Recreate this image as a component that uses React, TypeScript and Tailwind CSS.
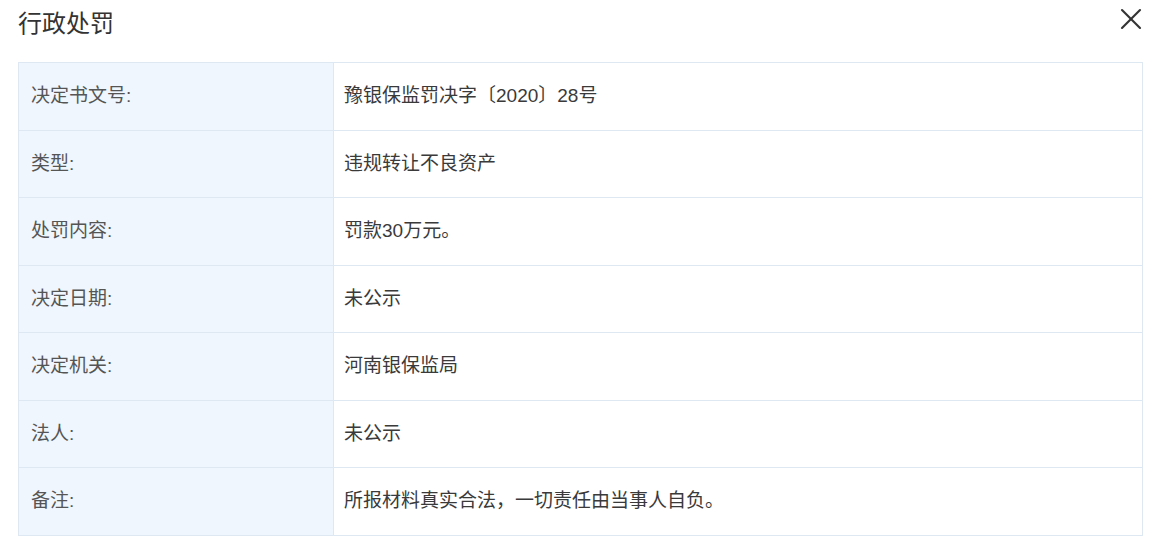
import { X } from 'lucide-react';

const rows: [string, string][] = [
  ['决定书文号:', '豫银保监罚决字〔2020〕28号'],
  ['类型:', '违规转让不良资产'],
  ['处罚内容:', '罚款30万元。'],
  ['决定日期:', '未公示'],
  ['决定机关:', '河南银保监局'],
  ['法人:', '未公示'],
  ['备注:', '所报材料真实合法，一切责任由当事人自负。'],
];

export default function App() {
  return (
    <div
      className="w-[1173px] h-[559px] bg-white text-[#333]"
      style={{ fontFamily: '"Liberation Sans", "Noto Sans CJK SC", sans-serif' }}
    >
      {/* Header */}
      <div className="flex items-center justify-between h-[48px] pl-[18px] pr-[24px]">
        <h1 className="text-[24px] font-normal text-[#333] leading-none">行政处罚</h1>
        <X className="w-[36px] h-[36px] -mt-[10px] text-[#333]" strokeWidth={1.4} />
      </div>

      {/* Detail table */}
      <div className="mt-[14px] ml-[18px] w-[1125px] border-t border-l border-r border-[#dde8f3]">
        {rows.map(([label, value]) => (
          <div key={label} className="flex h-[67.5px] border-b border-[#dde8f3]">
            <div className="w-[315px] shrink-0 flex items-center pl-[12px] bg-[#eff6fd] border-r border-[#dde8f3] text-[19px] text-[#555]">
              {label}
            </div>
            <div className="flex-1 flex items-center pl-[10px] text-[19px] text-[#3a3a3a]">{value}</div>
          </div>
        ))}
      </div>
    </div>
  );
}
